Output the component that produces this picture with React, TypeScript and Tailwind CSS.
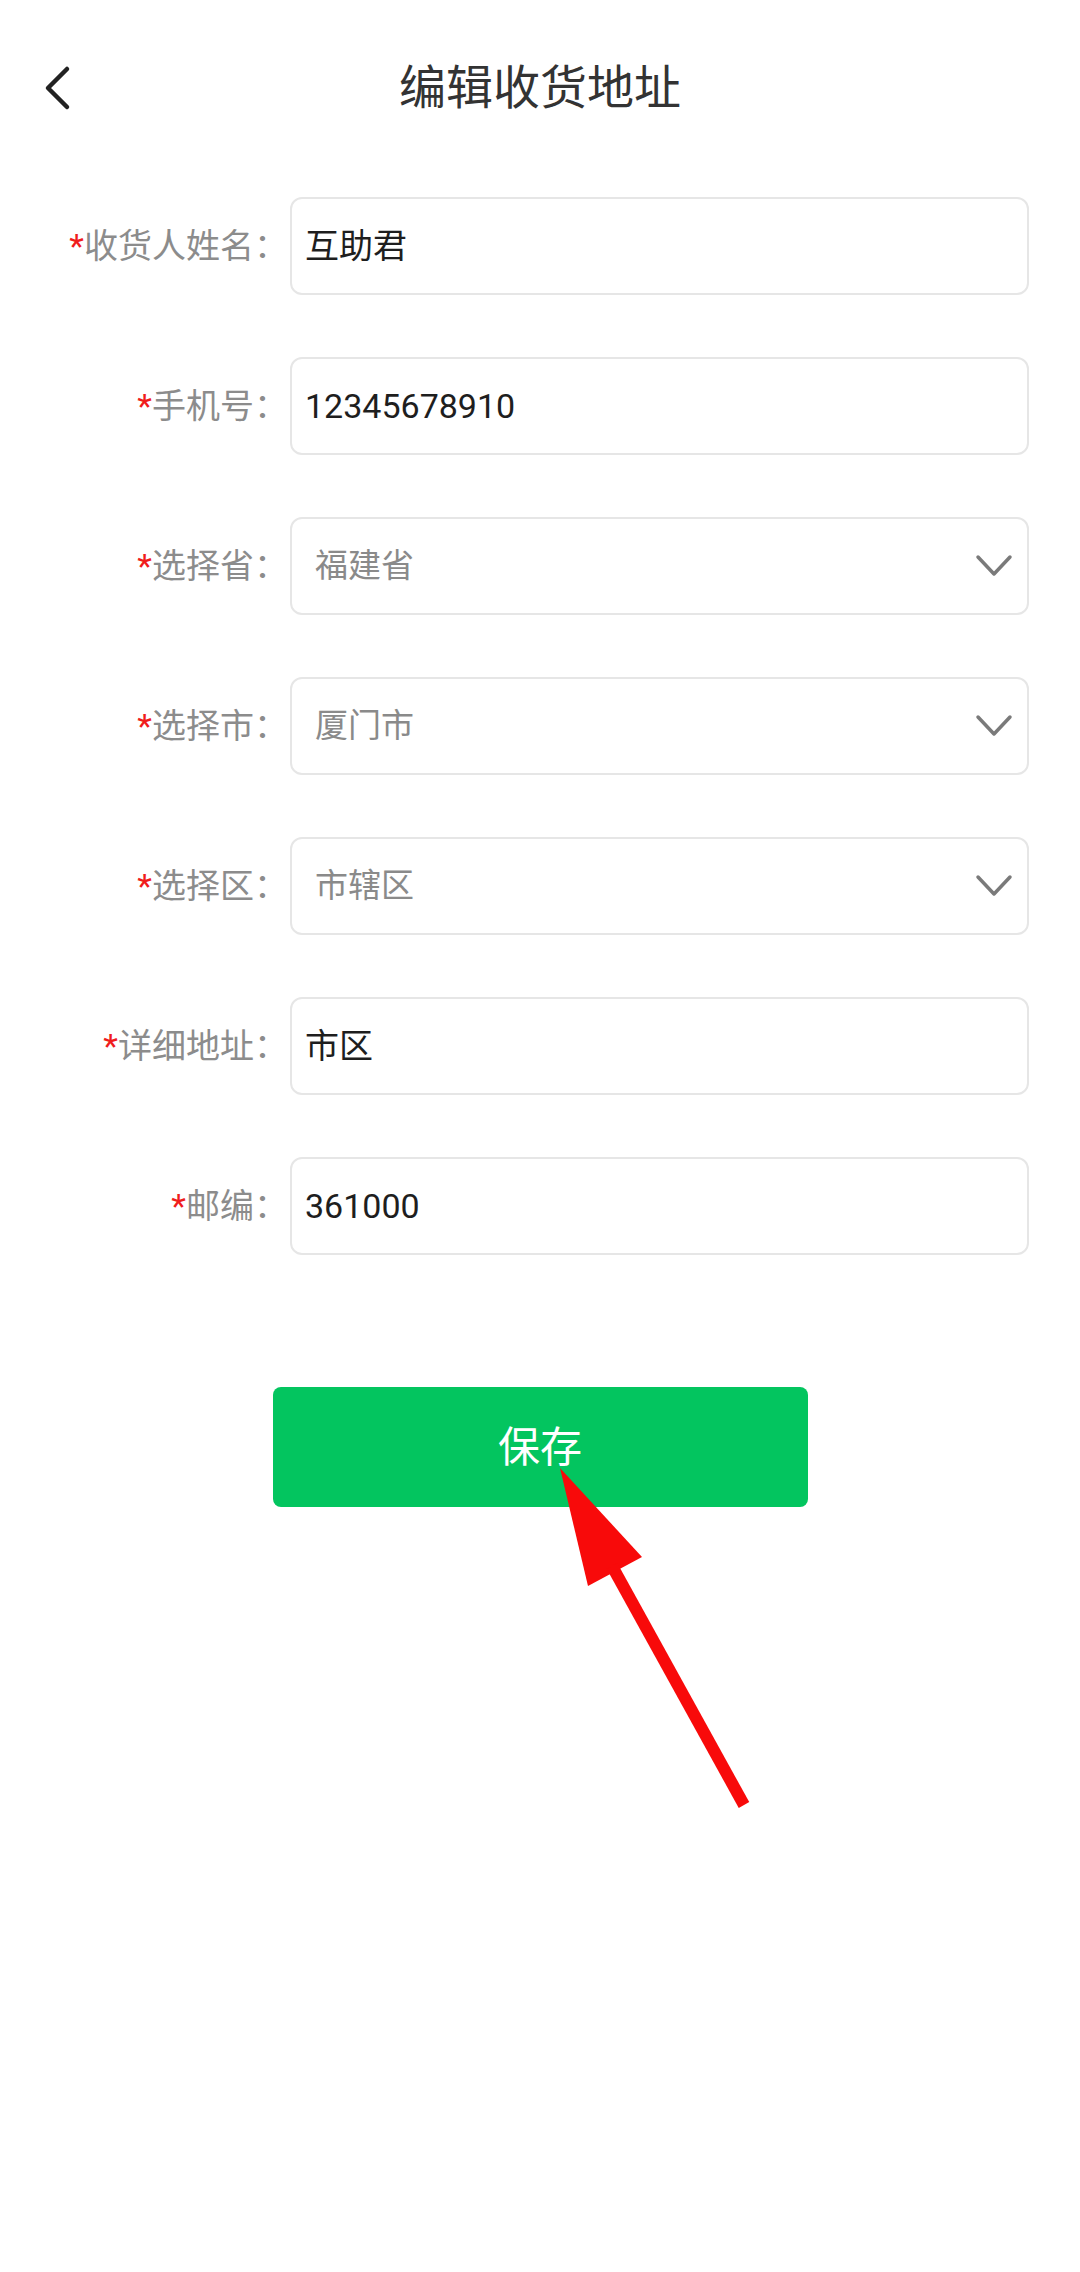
const FONT = { fontFamily: 'Roboto, "Noto Sans CJK SC", sans-serif' };

type Field = { label: string; value: string; select?: boolean };

const fields: Field[] = [
  { label: "收货人姓名", value: "互助君" },
  { label: "手机号", value: "12345678910" },
  { label: "选择省", value: "福建省", select: true },
  { label: "选择市", value: "厦门市", select: true },
  { label: "选择区", value: "市辖区", select: true },
  { label: "详细地址", value: "市区" },
  { label: "邮编", value: "361000" },
];

function ChevronDown() {
  return (
    <svg width="38" height="24" viewBox="0 0 38 24" fill="none">
      <path d="M3 3 L19 20 L35 3" stroke="#7a7a7a" strokeWidth="3.5" strokeLinecap="round" strokeLinejoin="round" />
    </svg>
  );
}

function FormRow({ field }: { field: Field }) {
  return (
    <div className="flex items-center">
      <div className="w-[290px] shrink-0 pr-[2px] text-right text-[34px] leading-none text-[#8c8c8c]">
        <span className="text-[#f01c1c]">*</span>
        {field.label}：
      </div>
      <div className="flex h-[98px] flex-1 items-center justify-between rounded-[12px] border-2 border-[#e6e6e6] bg-white">
        {field.select ? (
          <>
            <span className="pl-[23px] text-[33px] text-[#8a8a8a]">{field.value}</span>
            <span className="pr-[14px]">
              <ChevronDown />
            </span>
          </>
        ) : (
          <span className="pl-[13px] text-[34px] text-[#1e1e1e]">{field.value}</span>
        )}
      </div>
    </div>
  );
}

export default function App() {
  return (
    <div className="relative h-[2272px] w-[1080px] overflow-hidden bg-white" style={FONT}>
      <div className="grid h-[176px] grid-cols-[1fr_auto_1fr] items-center">
        <div className="pl-[40px]">
          <svg width="34" height="46" viewBox="0 0 34 46" fill="none">
            <path d="M27 4 L8 23 L27 42" stroke="#222" strokeWidth="4.5" strokeLinecap="round" strokeLinejoin="round" />
          </svg>
        </div>
        <h1 className="text-[47px] font-normal text-[#333]">编辑收货地址</h1>
        <div />
      </div>

      <div className="mt-[21px] flex flex-col gap-[62px] pr-[51px]">
        {fields.map((f) => (
          <FormRow key={f.label} field={f} />
        ))}
      </div>

      <div className="mt-[132px] flex justify-center">
        <button className="h-[120px] w-[535px] rounded-[8px] bg-[#03c55f] text-[42px] text-white">
          保存
        </button>
      </div>

      <svg className="pointer-events-none absolute inset-0" width="1080" height="2272" viewBox="0 0 1080 2272">
        <polygon points="560,1468 588,1586 642,1557" fill="#f80a0a" />
        <line x1="612" y1="1566" x2="744" y2="1805" stroke="#f80a0a" strokeWidth="12" />
      </svg>
    </div>
  );
}
